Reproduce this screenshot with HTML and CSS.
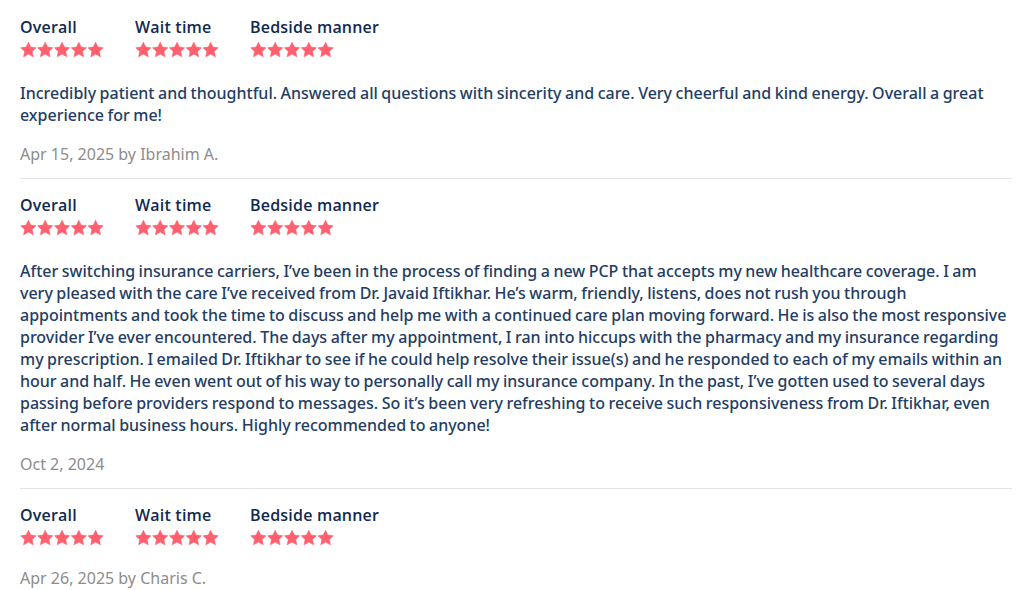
FILE: index.html
```html
<!DOCTYPE html>
<html lang="en">
<head>
<meta charset="utf-8">
<link rel="stylesheet" href="styles.css">
</head>
<body>
<div class="reviews">
  <section class="review">
    <div class="ratings">
      <div class="rating"><div class="label">Overall</div><svg class="stars" viewBox="0 0 84 16"><use href="#s5"/></svg></div>
      <div class="rating"><div class="label">Wait time</div><svg class="stars" viewBox="0 0 84 16"><use href="#s5"/></svg></div>
      <div class="rating"><div class="label">Bedside manner</div><svg class="stars" viewBox="0 0 84 16"><use href="#s5"/></svg></div>
    </div>
    <p class="text">Incredibly patient and thoughtful. Answered all questions with sincerity and care. Very cheerful and kind energy. Overall a great experience for me!</p>
    <div class="date">Apr 15, 2025 by Ibrahim A.</div>
  </section>
  <section class="review">
    <div class="ratings">
      <div class="rating"><div class="label">Overall</div><svg class="stars" viewBox="0 0 84 16"><use href="#s5"/></svg></div>
      <div class="rating"><div class="label">Wait time</div><svg class="stars" viewBox="0 0 84 16"><use href="#s5"/></svg></div>
      <div class="rating"><div class="label">Bedside manner</div><svg class="stars" viewBox="0 0 84 16"><use href="#s5"/></svg></div>
    </div>
    <p class="text">After switching insurance carriers, I’ve been in the process of finding a new PCP that accepts my new healthcare coverage. I am very pleased with the care I’ve received from Dr. Javaid Iftikhar. He’s warm, friendly, listens, does not rush you through appointments and took the time to discuss and help me with a continued care plan moving forward. He is also the most responsive provider I’ve ever encountered. The days after my appointment, I ran into hiccups with the pharmacy and my insurance regarding my prescription. I emailed Dr. Iftikhar to see if he could help resolve their issue(s) and he responded to each of my emails within an hour and half. He even went out of his way to personally call my insurance company. In the past, I’ve gotten used to several days passing before providers respond to messages. So it’s been very refreshing to receive such responsiveness from Dr. Iftikhar, even after normal business hours. Highly recommended to anyone!</p>
    <div class="date">Oct 2, 2024</div>
  </section>
  <section class="review last">
    <div class="ratings">
      <div class="rating"><div class="label">Overall</div><svg class="stars" viewBox="0 0 84 16"><use href="#s5"/></svg></div>
      <div class="rating"><div class="label">Wait time</div><svg class="stars" viewBox="0 0 84 16"><use href="#s5"/></svg></div>
      <div class="rating"><div class="label">Bedside manner</div><svg class="stars" viewBox="0 0 84 16"><use href="#s5"/></svg></div>
    </div>
    <div class="date">Apr 26, 2025 by Charis C.</div>
  </section>
</div>
<svg class="defs" width="0" height="0" aria-hidden="true">
  <defs>
    <path id="star" d="M8.4 0.3 L10.7 5.1 L16 5.8 L12.1 9.4 L13.2 14.8 L8.4 12.1 L3.6 14.8 L4.7 9.4 L0.8 5.8 L6.1 5.1 Z"/>
    <g id="s5" fill="#ff5f6e" stroke="#ff5f6e" stroke-width="0.6" stroke-linejoin="round">
      <use href="#star"/>
      <use href="#star" x="16.8"/>
      <use href="#star" x="33.6"/>
      <use href="#star" x="50.4"/>
      <use href="#star" x="67.2"/>
    </g>
  </defs>
</svg>
</body>
</html>
```

FILE: styles.css
```css
html, body {
  margin: 0;
  padding: 0;
  background: #ffffff;
}

body {
  font-family: "Noto Sans", "Open Sans", "Liberation Sans", sans-serif;
  color: #233d64;
}

.reviews {
  padding: 0 12px 0 20px;
}

.review {
  padding: 16px 0 13px;
  border-bottom: 1px solid #e4e4e4;
}

.review + .review {
  padding-top: 15px;
}

.review.last {
  border-bottom: none;
}

.ratings {
  display: flex;
}

.rating {
  width: 115px;
  display: flex;
  flex-direction: column;
}

.rating:last-child {
  width: auto;
}

.label {
  font-family: "Open Sans", "Noto Sans", sans-serif;
  font-size: 16px;
  line-height: 22px;
  font-weight: 600;
  color: #112a50;
  white-space: nowrap;
  letter-spacing: 0.2px;
}

.stars {
  display: block;
  width: 84px;
  height: 16px;
  margin-top: 4px;
}

.text {
  margin: 24px 0 0;
  font-size: 16px;
  line-height: 22px;
  font-weight: 500;
  word-spacing: -0.65px;
}

.date {
  margin-top: 17px;
  font-size: 16px;
  line-height: 22px;
  font-weight: 400;
  color: #8c8c8c;
}

.ratings + .date {
  margin-top: 21px;
}

.defs {
  position: absolute;
  width: 0;
  height: 0;
}
```
